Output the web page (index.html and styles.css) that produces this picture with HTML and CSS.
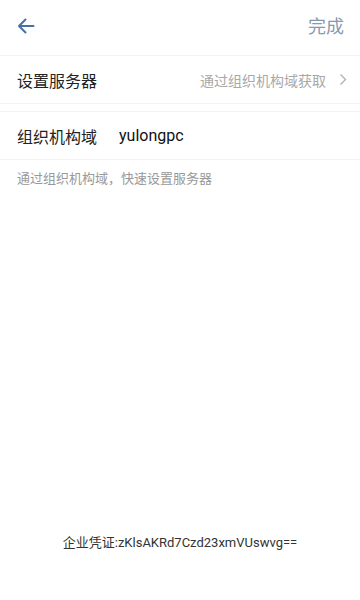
FILE: index.html
```
<!DOCTYPE html>
<html>
<head>
<meta charset="utf-8">
<link rel="stylesheet" href="styles.css">
</head>
<body>
<div class="page">
  <header class="topbar">
    <svg class="back" width="18" height="16" viewBox="0 0 18 16"><path d="M16.5 8H2M8.5 1.5L2 8l6.5 6.5" fill="none" stroke="#4a6fa5" stroke-width="2" stroke-linecap="round" stroke-linejoin="round"/></svg>
    <span class="done">完成</span>
  </header>
  <div class="row">
    <span class="label">设置服务器</span>
    <span class="right">通过组织机构域获取
      <svg class="chev" width="8" height="13" viewBox="0 0 8 13"><path d="M1.5 1.5l5 5-5 5" fill="none" stroke="#b0b0b0" stroke-width="1.3"/></svg>
    </span>
  </div>
  <div class="gap"></div>
  <div class="row">
    <span class="label">组织机构域</span>
    <span class="value">yulongpc</span>
  </div>
  <p class="hint">通过组织机构域，快速设置服务器</p>
  <div class="spacer"></div>
  <p class="cred">企业凭证:zKlsAKRd7Czd23xmVUswvg==</p>
</div>
</body>
</html>
```
FILE: styles.css
```
* { box-sizing: border-box; }
html, body { margin: 0; padding: 0; background: #fff; }
body { font-family: Roboto, "Noto Sans CJK SC", sans-serif; }
.page { width: 360px; height: 600px; display: flex; flex-direction: column; }
.topbar { height: 56px; display: flex; align-items: center; justify-content: space-between; padding: 0 16px 6px 17px; border-bottom: 1px solid #f3f3f3; }
.back { display: block; margin-top: 2px; }
.done { font-size: 18px; color: #8798b3; }
.row { height: 48px; display: flex; align-items: center; padding: 0 13px 0 17px; border-bottom: 1px solid #f3f3f3; }
.label { font-size: 16px; color: #222; }
.right { margin-left: auto; font-size: 14px; color: #a8a8a8; display: flex; align-items: center; gap: 13px; }
.chev { display: block; }
.value { font-size: 16px; color: #111; margin-left: 22px; }
.gap { height: 8px; border-bottom: 1px solid #f3f3f3; }
.hint { margin: 0; padding: 8px 17px 0; font-size: 13px; color: #999; }
.spacer { flex: 1; }
.cred { margin: 0 0 49px; text-align: center; font-size: 13px; color: #333; }
```
